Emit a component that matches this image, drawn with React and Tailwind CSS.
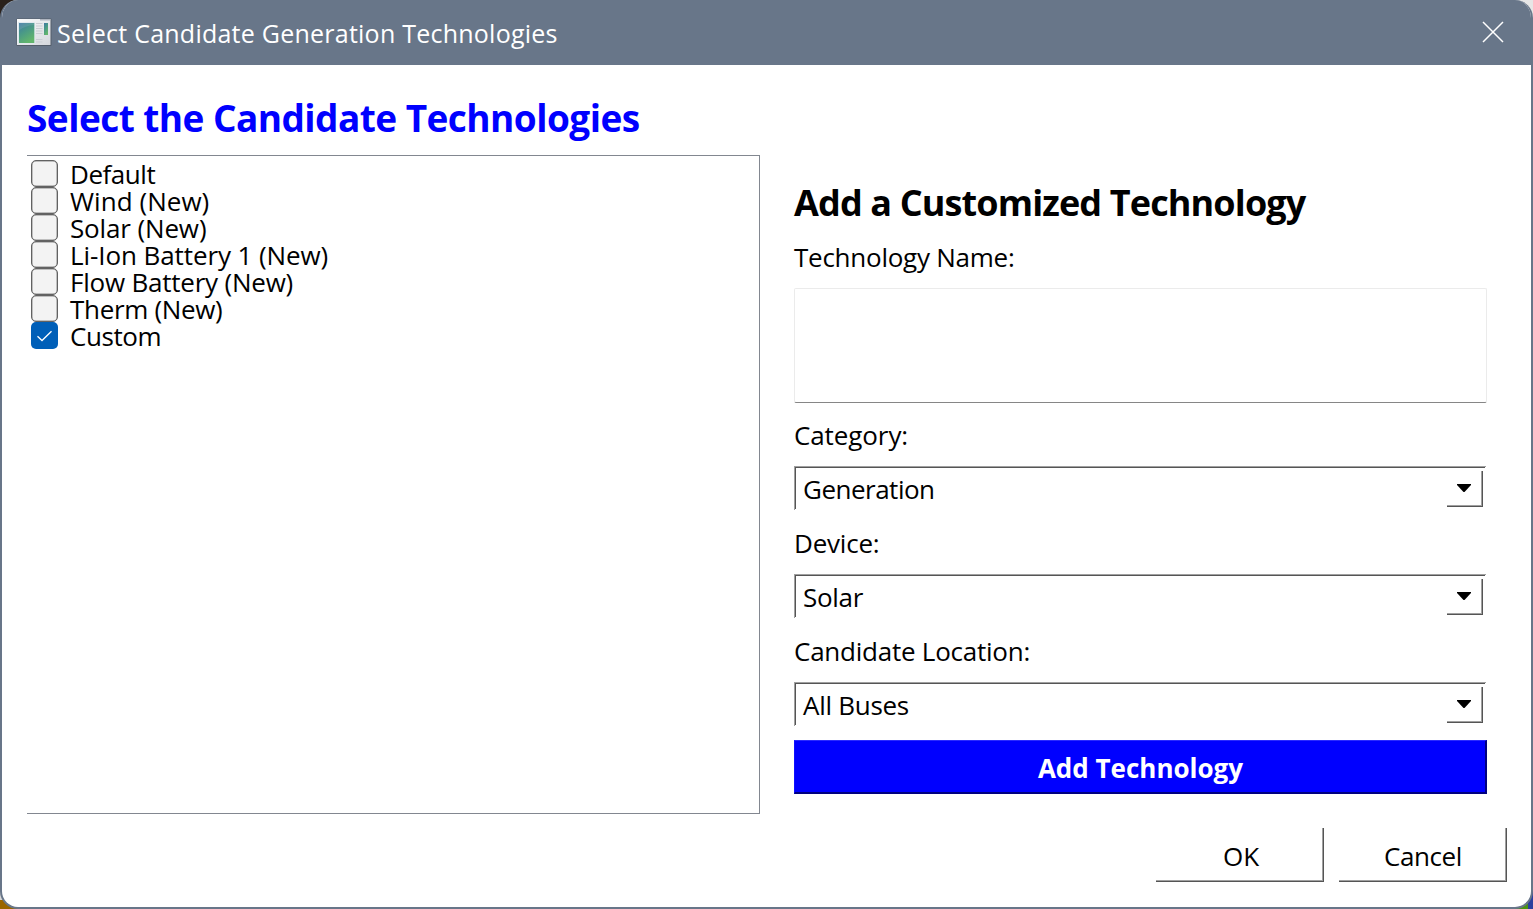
const TECHNOLOGIES = [
  { name: "Default", track: "tracking-[-0.45px]" },
  { name: "Wind (New)", track: "tracking-[0.05px]" },
  { name: "Solar (New)", track: "tracking-[-0.14px]" },
  { name: "Li-Ion Battery 1 (New)", track: "tracking-[-0.09px]" },
  { name: "Flow Battery (New)", track: "tracking-[-0.22px]" },
  { name: "Therm (New)", track: "tracking-[-0.32px]" },
  { name: "Custom", track: "tracking-[-0.42px]", checked: true },
];

function AppIcon() {
  return (
    <svg width="36" height="29" viewBox="0 0 36 29" className="shrink-0">
      <defs>
        <linearGradient id="pane" x1="0" y1="0" x2="0.5" y2="1">
          <stop offset="0" stopColor="#3f78a5" />
          <stop offset="0.5" stopColor="#4a9a86" />
          <stop offset="1" stopColor="#62b56c" />
        </linearGradient>
        <linearGradient id="frame" x1="0" y1="0" x2="1" y2="1">
          <stop offset="0" stopColor="#fafbfc" />
          <stop offset="1" stopColor="#d4d7dc" />
        </linearGradient>
      </defs>
      <rect x="0.5" y="0.5" width="35" height="27.5" rx="1" fill="#535d6a" />
      <rect x="1" y="1" width="33.5" height="26" fill="url(#frame)" />
      <rect x="24" y="1" width="10" height="1.5" fill="#aeb4bf" />
      <rect x="2" y="4" width="17" height="21.5" fill="#dfe9ef" />
      <rect x="3" y="5" width="15.300" height="20" fill="url(#pane)" />
      <path d="M3 12.500Q9 7.500 18.300 7V5H3Z" fill="#ffffff" opacity="0.1" />
      <path d="M20 5.500h6.500M20 8h6.500M20 10.500h6.500M20 13h6.500M20 15.500h6.500M20 21.500h6.500M20 24h6.500" stroke="#c9cdd3" strokeWidth="1" />
      <rect x="28" y="5" width="4" height="12" fill="url(#pane)" />
    </svg>
  );
}

function Checkbox({ checked }) {
  return checked ? (
    <span className="flex h-[27px] w-[27px] items-center justify-center rounded-[5px] bg-[#005fb8]">
      <svg width="27" height="27" viewBox="0 0 27 27" fill="none" stroke="#fff" strokeWidth="1.3">
        <path d="M6.500 14.200 11 18.500 20.500 9.200" />
      </svg>
    </span>
  ) : (
    <span className="h-[27px] w-[27px] rounded-[5px] border-[1.500px] border-[#626262] bg-[#f3f3f3] shadow-[inset_0_0_0_0.5px_#8a8a8a]" />
  );
}

function Select({ value, track }) {
  return (
    <div className="flex h-[44px] w-[692px] border-l border-t border-[#a0a0a0]">
      <div className="flex h-[42px] w-[690px] items-start justify-between border-l border-t border-[#555]">
        <span className={"pl-[7px] pt-[4px] leading-[34px] " + track}>{value}</span>
        <div className="mr-[2px] mt-[3px] h-9 w-9 border-b border-r border-[#555]">
          <div className="flex h-[35px] w-[35px] items-start justify-center border-b border-r border-[#a0a0a0] pt-[13px]">
            <svg width="14" height="8" viewBox="0 0 14 8">
              <path d="M0 0H14V1L7.500 8H6.500L0 1Z" fill="#000" />
            </svg>
          </div>
        </div>
      </div>
    </div>
  );
}

function DialogButton({ children, nudge }) {
  return (
    <div className="h-[54px] w-[168px] border-b border-r border-[#555]">
      <div className={"flex h-[53px] w-[167px] items-center justify-center border-b border-r border-[#a0a0a0] pt-[4px] " + nudge}>
        {children}
      </div>
    </div>
  );
}

export default function App() {
  return (
    <div className="flex h-[909px] w-[1533px] flex-col overflow-hidden bg-[linear-gradient(90deg,#2a211b_50%,#e6e6e6_50%)] font-['Open_Sans','Noto_Sans',sans-serif] text-[26px] text-black">
      <div className="mt-[450px] h-[450px] shrink-0 bg-[linear-gradient(90deg,#d8d8d8_50%,#2b3f9e_50%)]" />
      <div className="h-[9px] shrink-0 bg-[linear-gradient(90deg,#9a6500_50%,#4c9410_50%,#4c9410_1528px,#2b3f9e_1528px)]" />
      <div className="relative -mt-[909px] flex h-[909px] w-[1533px] shrink-0 flex-col overflow-hidden rounded-[18px] border-x-2 border-b-2 border-[#687689] bg-white">
        <header className="flex h-[65px] shrink-0 items-center bg-[#687689] pl-[14px] pr-[27px] text-[25px] text-white">
          <AppIcon />
          <h1 className="ml-[5px] grow whitespace-nowrap pt-[2px] tracking-[0.24px]">Select Candidate Generation Technologies</h1>
          <svg width="22" height="22" viewBox="0 0 22 22" stroke="#fff" strokeWidth="1.500" className="mb-[2px]">
            <path d="M1 1 21 21M21 1 1 21" />
          </svg>
        </header>
        <main className="flex grow flex-col pl-[25px] pr-[24px]">
          <h2 className="h-[90px] whitespace-nowrap pt-[28px] text-[37px] font-bold leading-[50px] tracking-[-0.55px] text-[#0000ff]">
            Select the Candidate Technologies
          </h2>
          <div className="flex h-[659px] gap-[34px]">
            <section className="w-[733px] border-y border-r border-[#828790] pl-[4px] pt-[4px]">
              {TECHNOLOGIES.map((t) => (
                <label key={t.name} className="flex h-[27px] items-center gap-[12px]">
                  <Checkbox checked={t.checked} />
                  <span className={"pt-[2px] leading-[27px] " + t.track}>{t.name}</span>
                </label>
              ))}
            </section>
            <section className="w-[693px]">
              <h3 className="h-[76px] whitespace-nowrap pt-[23px] text-[36px] font-bold leading-[50px] tracking-[-0.87px]">
                Add a Customized Technology
              </h3>
              <div className="h-[57px] pt-[9px] leading-[34px] tracking-[-0.25px]">Technology Name:</div>
              <div className="h-[115px] rounded-[2px] border border-[#ebebeb] border-b-[#868686]" />
              <div className="h-[63px] pt-[14px] leading-[36px] tracking-[-0.1px]">Category:</div>
              <Select value="Generation" track="tracking-[-0.5px]" />
              <div className="h-[64px] pt-[15px] leading-[36px] tracking-[-0.2px]">Device:</div>
              <Select value="Solar" track="tracking-[-0.3px]" />
              <div className="h-[64px] pt-[15px] leading-[36px] tracking-[-0.24px]">Candidate Location:</div>
              <Select value="All Buses" track="tracking-[-0.28px]" />
              <div className="mt-[14px] flex h-[54px] items-center justify-center border border-b-2 border-r-2 border-b-[#000080] border-l-[#1010ff] border-r-[#000080] border-t-[#2a2aff] bg-[#0000ff] pl-[1px] pt-[4px] font-bold text-white">
                Add Technology
              </div>
            </section>
          </div>
          <footer className="flex justify-end gap-[15px] pt-[14px]">
            <DialogButton nudge="pl-[4px]">OK</DialogButton>
            <DialogButton nudge="pl-[2px] tracking-[-0.4px]">Cancel</DialogButton>
          </footer>
        </main>
      </div>
    </div>
  );
}
